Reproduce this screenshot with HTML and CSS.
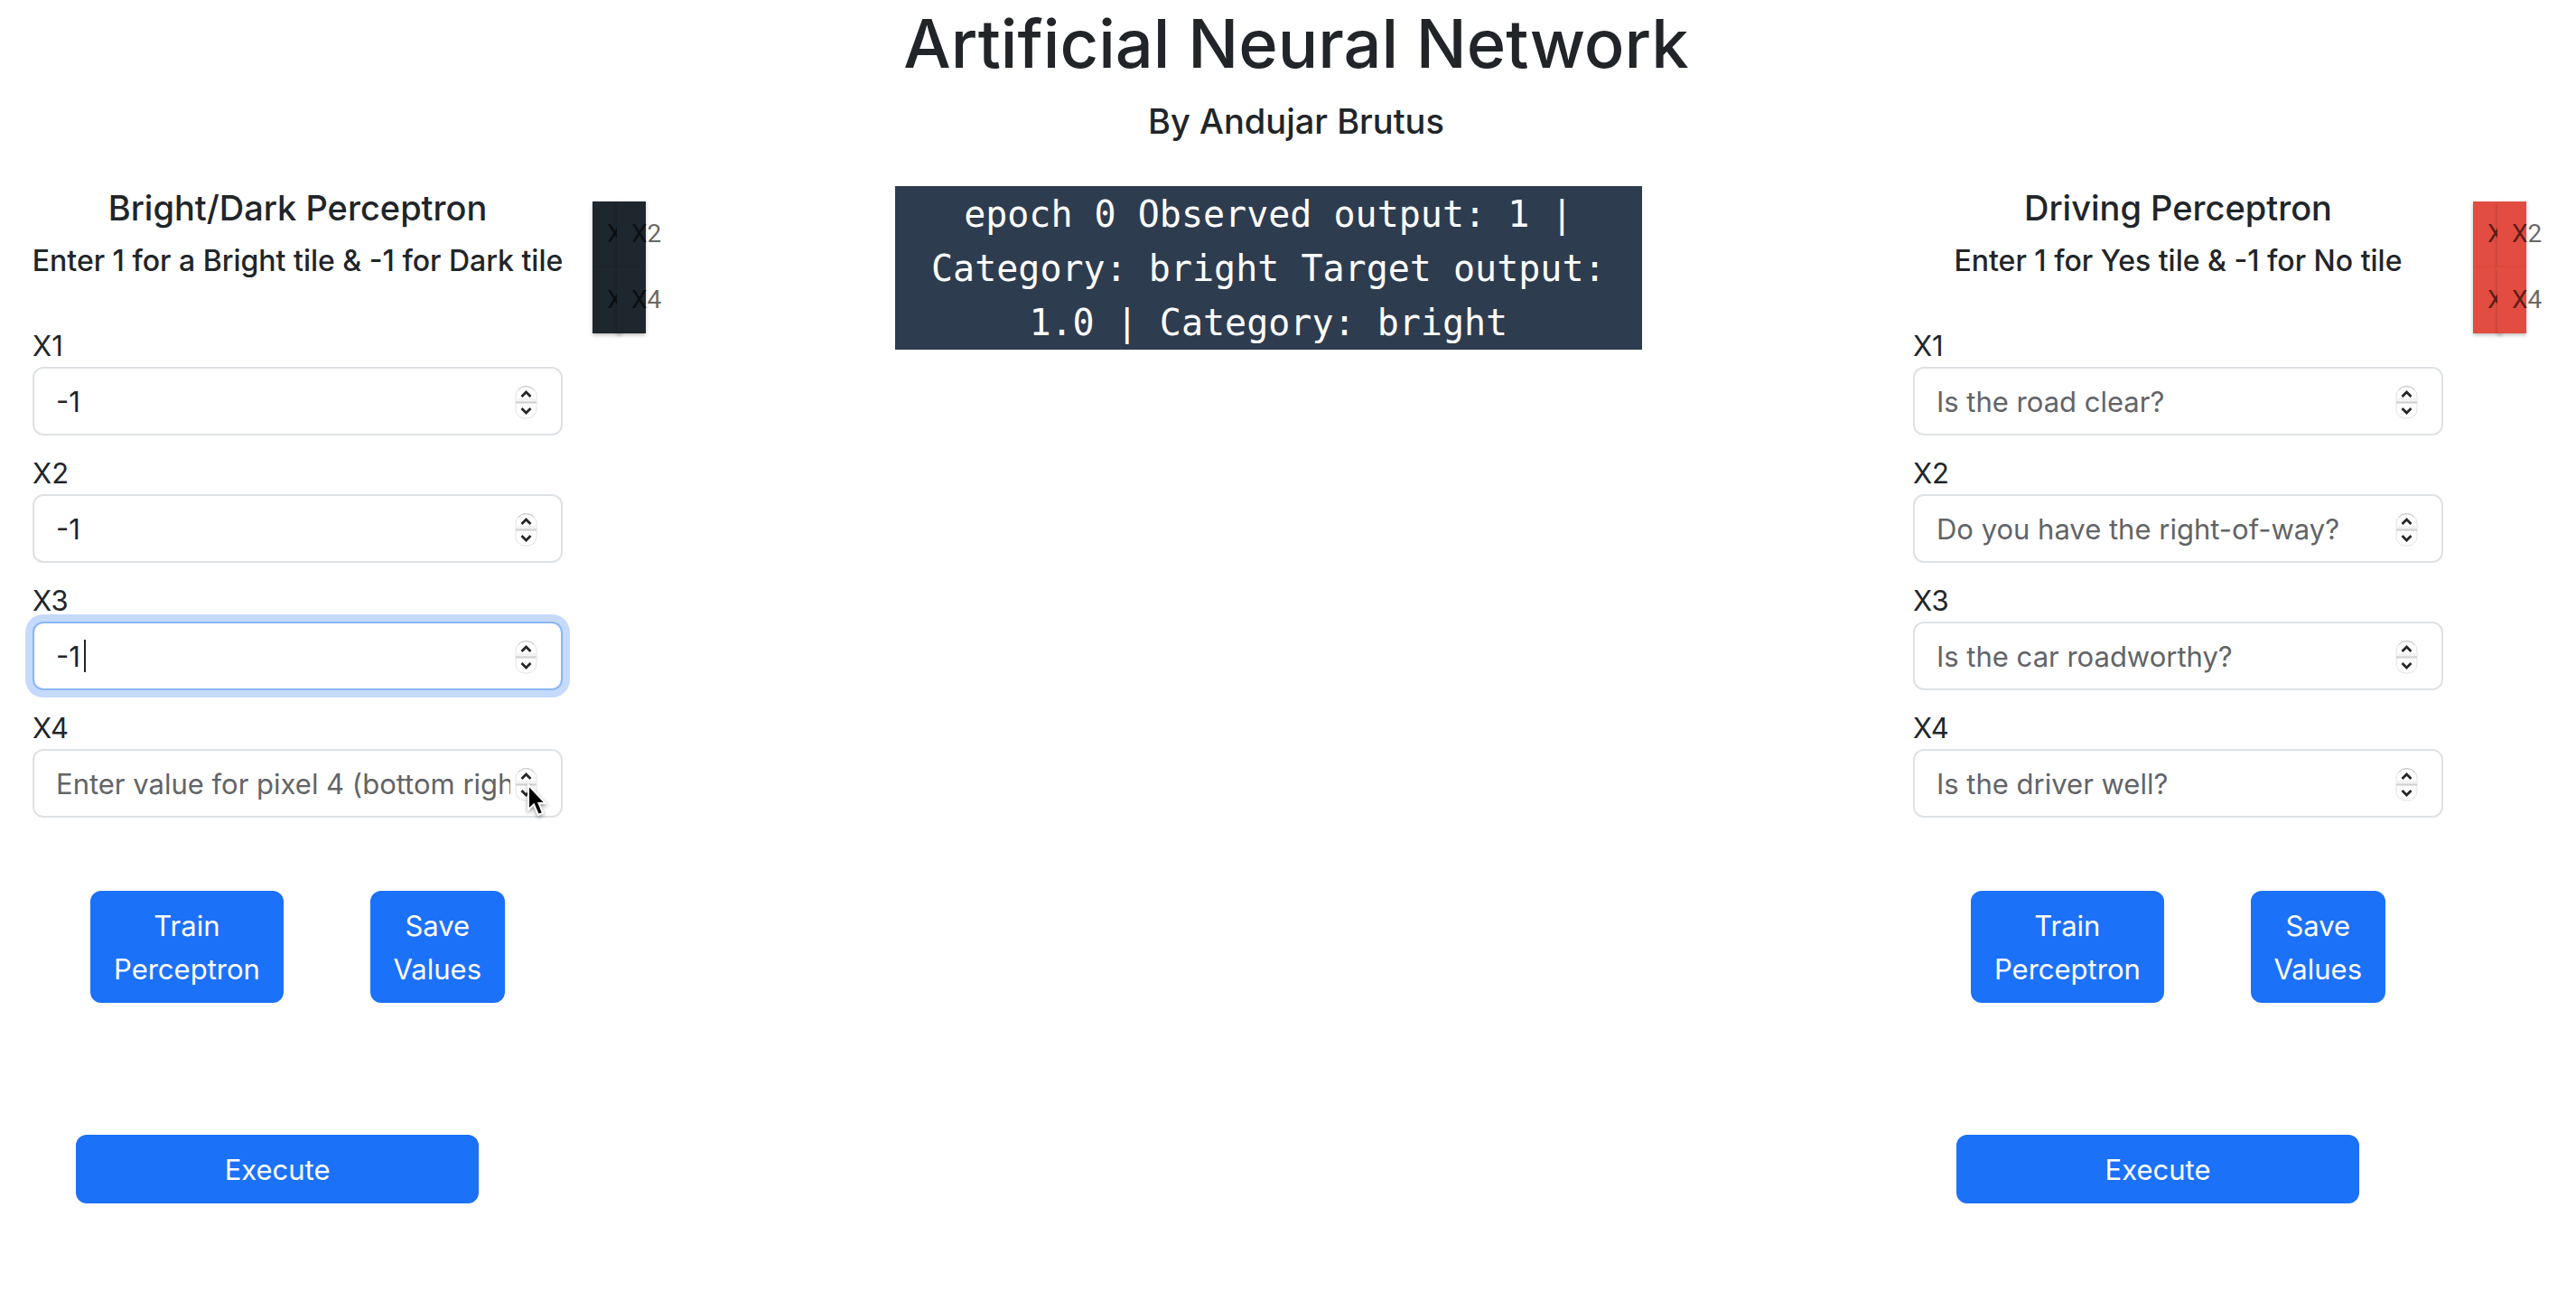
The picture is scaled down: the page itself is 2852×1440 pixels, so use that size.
FILE: index.html
```html
<!DOCTYPE html>
<html lang="en">
<head>
<meta charset="utf-8">
<meta name="viewport" content="width=device-width, initial-scale=1">
<title>Artificial Neural Network</title>
<link rel="stylesheet" href="styles.css">
</head>
<body>
<svg class="defs" aria-hidden="true">
  <symbol id="stepper" viewBox="0 0 27 39">
    <rect x="2" y="2" width="23" height="35" rx="10" fill="#fff" stroke="#e2e2e2"/>
    <path d="M5 5.500Q8 1.500 13.500 1.500T22 5.500" fill="none" stroke="#c4c4c4"/>
    <path d="M2 15H25V19.500H2Z" fill="#f4f4f4"/>
    <path d="M2 19.500H25" stroke="#cfcfcf" stroke-width="2"/>
    <path d="M8.500 13 13.500 8 18.500 13M8.500 26 13.500 31 18.500 26" fill="none" stroke="#262626" stroke-width="2.800"/>
  </symbol>
</svg>
<header class="page-header">
  <h1>Artificial Neural Network</h1>
  <h2>By Andujar Brutus</h2>
</header>
<main class="layout">
  <section class="panel">
    <form class="perceptron">
      <h3>Bright/Dark Perceptron</h3>
      <h4>Enter 1 for a Bright tile &amp; -1 for Dark tile</h4>
      <div class="fields">
        <div class="field">
          <label for="b1">X1</label>
          <div class="control"><input id="b1" type="number" value="-1"><svg class="stepper"><use href="#stepper"/></svg></div>
        </div>
        <div class="field">
          <label for="b2">X2</label>
          <div class="control"><input id="b2" type="number" value="-1"><svg class="stepper"><use href="#stepper"/></svg></div>
        </div>
        <div class="field">
          <label for="b3">X3</label>
          <div class="control"><input id="b3" class="active" type="number" value="-1"><span class="caret"></span><svg class="stepper"><use href="#stepper"/></svg></div>
        </div>
        <div class="field">
          <label for="b4">X4</label>
          <div class="control"><input id="b4" type="number" placeholder="Enter value for pixel 4 (bottom right)"><svg class="stepper"><use href="#stepper"/></svg>
            <svg class="pointer" viewBox="0 0 24 38"><path d="M2 2V29L8 23.500 13 35 18 33 13.500 22H21Z" fill="#000" stroke="#fff" stroke-width="2"/></svg>
          </div>
        </div>
      </div>
      <div class="actions">
        <button type="button">Train Perceptron</button>
        <button type="button">Save Values</button>
      </div>
      <button class="execute" type="button">Execute</button>
    </form>
    <div class="tiles dark">
      <div class="tile">X1</div><div class="tile">X2</div>
      <div class="tile">X3</div><div class="tile">X4</div>
    </div>
  </section>
  <section class="results">
    <p class="output">epoch 0 Observed output: 1 | Category: bright Target output: 1.0 | Category: bright</p>
  </section>
  <section class="panel">
    <form class="perceptron">
      <h3>Driving Perceptron</h3>
      <h4>Enter 1 for Yes tile &amp; -1 for No tile</h4>
      <div class="fields">
        <div class="field">
          <label for="d1">X1</label>
          <div class="control"><input id="d1" type="number" placeholder="Is the road clear?"><svg class="stepper"><use href="#stepper"/></svg></div>
        </div>
        <div class="field">
          <label for="d2">X2</label>
          <div class="control"><input id="d2" type="number" placeholder="Do you have the right-of-way?"><svg class="stepper"><use href="#stepper"/></svg></div>
        </div>
        <div class="field">
          <label for="d3">X3</label>
          <div class="control"><input id="d3" type="number" placeholder="Is the car roadworthy?"><svg class="stepper"><use href="#stepper"/></svg></div>
        </div>
        <div class="field">
          <label for="d4">X4</label>
          <div class="control"><input id="d4" type="number" placeholder="Is the driver well?"><svg class="stepper"><use href="#stepper"/></svg></div>
        </div>
      </div>
      <div class="actions">
        <button type="button">Train Perceptron</button>
        <button type="button">Save Values</button>
      </div>
      <button class="execute" type="button">Execute</button>
    </form>
    <div class="tiles red">
      <div class="tile">X1</div><div class="tile">X2</div>
      <div class="tile">X3</div><div class="tile">X4</div>
    </div>
  </section>
</main>
</body>
</html>
```
FILE: styles.css
```css
* {
  box-sizing: border-box;
}

body {
  margin: 0;
  background: #fff;
  color: #212529;
  font: 400 31px/48px Inter, "Liberation Sans", sans-serif;
}

h1, h2, h3, h4, p {
  margin: 0;
}

h1, h2, h3, h4 {
  font-weight: 500;
  text-align: center;
}

h1 {
  font-size: 74px;
  line-height: 96px;
}

h2, h3 {
  font-size: 38px;
  line-height: 48px;
}

h4 {
  margin: 16px 0 50px;
  font-size: 32px;
  line-height: 38px;
  white-space: nowrap;
}

.defs {
  display: none;
}

.page-header {
  display: grid;
  gap: 14px;
  padding-left: 18px;
}

.layout {
  display: grid;
  grid-template-columns: 27fr 46fr 27fr;
  margin-top: 48px;
}

.panel {
  display: flex;
  gap: 33px;
  min-width: 0;
  padding-left: 36px;
}

.perceptron {
  flex: 1;
  min-width: 0;
}

.perceptron h4 {
  margin-inline: -20px;
}

.fields {
  display: grid;
  gap: 17px;
}

label {
  display: block;
  padding-top: 2px;
  line-height: 46px;
}

.control {
  position: relative;
}

input {
  display: block;
  width: 100%;
  height: 76px;
  padding: 12px 56px 12px 24px;
  border: 2px solid #dee2e6;
  border-radius: 12px;
  background: #fff;
  color: #212529;
  font: inherit;
  appearance: textfield;
}

input::-webkit-inner-spin-button {
  appearance: none;
}

input::placeholder {
  color: #626467;
  opacity: 1;
}

input:focus,
input.active {
  border-color: #8ab6f8;
  outline: 0;
  box-shadow: 0 0 0 8px #c6dafb;
}

.stepper {
  position: absolute;
  top: 20px;
  right: 27px;
  width: 27px;
  height: 39px;
}

.caret {
  position: absolute;
  top: 20px;
  left: 57px;
  width: 2px;
  height: 36px;
  background: #212529;
}

.pointer {
  position: absolute;
  top: 38px;
  right: 16px;
  width: 24px;
  height: 38px;
  filter: drop-shadow(0 2px 2px rgba(0, 0, 0, .4));
}

.actions {
  display: flex;
  justify-content: space-between;
  padding: 81px 64px 0;
}

button {
  padding: 13px 24px 11px;
  border: 2px solid #1c71f9;
  border-radius: 12px;
  background: #1c71f9;
  color: #fff;
  font: inherit;
}

.actions button {
  width: min-content;
}

.execute {
  display: block;
  width: 76%;
  margin: 146px 0 0 48px;
}

.tiles {
  display: grid;
  grid-template-columns: 27px 32px;
  grid-auto-rows: 73px;
  flex: 0 0 114px;
  align-self: start;
  margin-top: 17px;
}

.tile {
  padding: 12px 16px;
  box-shadow: 0 2px 4px rgba(0, 0, 0, .25);
  color: rgba(0, 0, 0, .6);
  font: 400 28px/48px Roboto, sans-serif;
  isolation: isolate;
}

.dark .tile {
  background: #1e262e;
}

.red .tile {
  background: #e34c41;
}

.output {
  width: 63%;
  margin-left: 221px;
  padding: 1px 24px 0;
  background: #2e3c4f;
  color: #fff;
  font: 400 40px/60px "DejaVu Sans Mono", monospace;
  text-align: center;
}
```
